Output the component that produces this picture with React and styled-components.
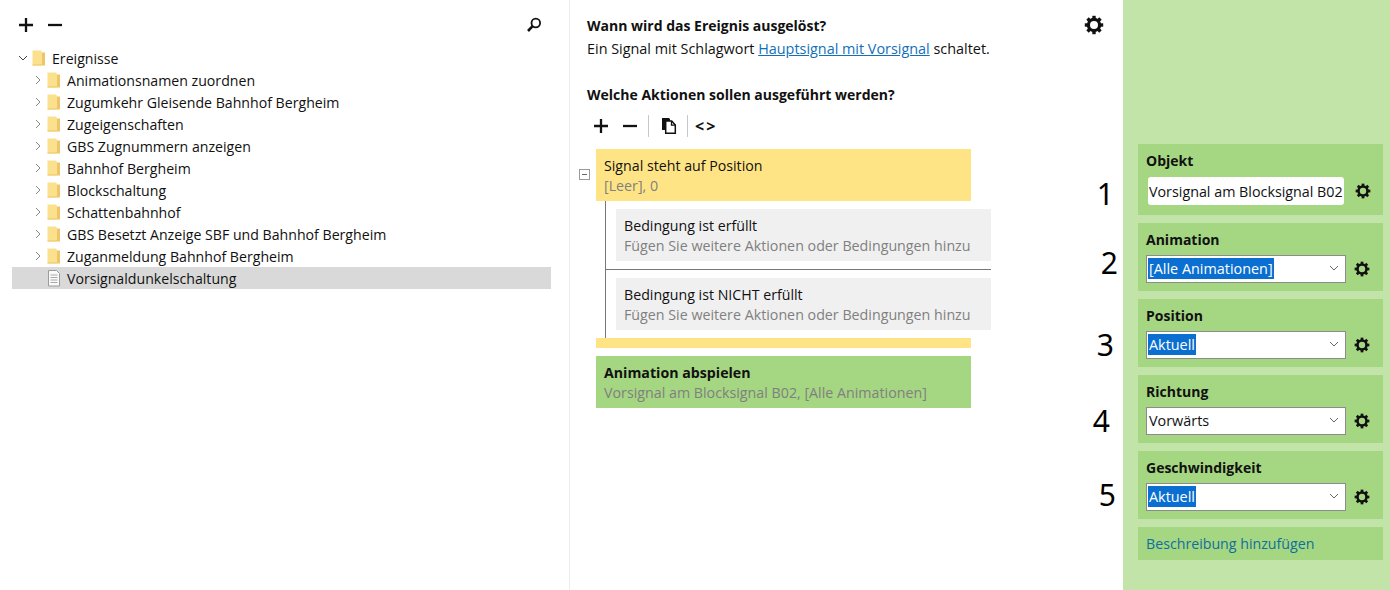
import styled, { createGlobalStyle } from "styled-components";

const Global = createGlobalStyle`
    html, body { margin: 0; padding: 0; background: #fff; }
    body { font-family: "Open Sans", "Noto Sans", sans-serif; font-size: 14.2px; color: #111; }
`;

const Page = styled.div`
    width: 1390px;
    height: 590px;
    display: grid;
    grid-template-columns: 570px 553px 267px;
    overflow: hidden;
`;

const Left = styled.div`
    border-right: 1px solid #ededed;
    padding: 12px 18px 0 12px;
`;

const TreeBar = styled.div`
    height: 25px;
    padding: 0 9px 0 6px;
    display: flex;
    align-items: center;
    gap: 13px;
    margin-bottom: 10px;
`;

const Spacer = styled.div`
    flex: 1;
`;

const Row = styled.div`
    height: 22px;
    display: flex;
    align-items: center;
    padding-left: ${props => props.$indent}px;
    background: ${props => props.$selected ? "#d9d9d9" : "transparent"};
    font-size: 14.15px;
    white-space: nowrap;
`;

const Arrow = styled.div`
    width: 14px;
    height: 22px;
    margin-right: 2px;
    display: flex;
    align-items: center;
    justify-content: center;
`;

const RowIcon = styled.svg`
    width: 15px;
    height: 18px;
    margin-right: 5px;
    flex: none;
`;

const Middle = styled.div`
    padding: 16px 0 0 17px;
    position: relative;
`;

const Heading = styled.div`
    font-weight: 700;
    line-height: 20px;
    font-size: 14px;
    margin-bottom: ${props => props.$gap || 0}px;
`;

const Sentence = styled.div`
    line-height: 22px;
    font-size: 14.4px;
    margin-bottom: 25px;
    & a { color: #1170b8; text-decoration: underline; }
`;

const TopGear = styled.svg`
    position: absolute;
    top: 15px;
    left: 514px;
    width: 20px;
    height: 20px;
`;

const ActionBar = styled.div`
    height: 24px;
    margin: 9px 0 11px 6px;
    display: flex;
    align-items: center;
    gap: 13px;
`;

const Divider = styled.div`
    width: 1px;
    height: 22px;
    background: #c8c8c8;
    margin: 0 -1px 0 -3px;
`;

const Code = styled.div`
    font-weight: 700;
    font-size: 16px;
    letter-spacing: 2px;
    margin-left: -5px;
`;

const Flow = styled.div`
    margin-left: 9px;
    width: 395px;
`;

const Block = styled.div`
    width: 375px;
    height: ${props => props.$height || 52}px;
    background: ${props => props.$color};
    padding: 7px 8px 0;
    box-sizing: border-box;
    margin-bottom: 8px;
    position: relative;
    white-space: nowrap;
`;

const Title = styled.div`
    line-height: 20px;
    font-weight: ${props => props.$bold ? 700 : 400};
`;

const Sub = styled.div`
    line-height: 20px;
    color: #808080;
    font-size: 14.25px;
`;

const Collapse = styled.div`
    position: absolute;
    left: -17px;
    top: 20px;
    width: 11px;
    height: 11px;
    border: 1px solid #9a9a9a;
    box-sizing: border-box;
    background: #fff;
    &::after {
        content: "";
        position: absolute;
        left: 2px;
        right: 2px;
        top: 4px;
        height: 1px;
        background: #666;
    }
`;

const Branches = styled.div`
    margin-left: 9px;
    border-left: 1px solid #777;
    margin-top: -8px;
    padding-top: 8px;
    height: 129px;
`;

const Branch = styled.div`
    margin-left: 10px;
    width: 375px;
    height: 52px;
    background: #f0f0f0;
    padding: 7px 8px 0;
    box-sizing: border-box;
    white-space: nowrap;
`;

const BranchLine = styled.div`
    height: 1px;
    background: #777;
    margin: 8px 0;
`;

const Sidebar = styled.div`
    background: #c3e4a9;
    padding: 144px 7px 0 15px;
    display: flex;
    flex-direction: column;
    gap: 8px;
`;

const Card = styled.div`
    background: #a5d682;
    height: ${props => props.$height || 68}px;
    box-sizing: border-box;
    padding: 7px 8px 0;
    position: relative;
`;

const Label = styled.div`
    font-weight: 700;
    line-height: 19px;
    font-size: 14px;
    margin-bottom: ${props => props.$gap || 6}px;
`;

const Field = styled.div`
    display: flex;
    align-items: center;
    gap: 8px;
`;

const TextBox = styled.div`
    width: 196px;
    height: 28px;
    margin: 0 3px 0 2px;
    background: #fff;
    border-radius: 3px;
    display: flex;
    align-items: center;
    padding-left: 1px;
    box-sizing: border-box;
    font-size: 14.3px;
    white-space: nowrap;
    overflow: hidden;
`;

const SelectBox = styled.div`
    width: 200px;
    height: 28px;
    background: #fff;
    border: 1px solid #8c8c8c;
    box-sizing: border-box;
    display: flex;
    align-items: center;
    justify-content: space-between;
    padding: 0 6px 2px 1px;
    font-size: 14.4px;
`;

const Picked = styled.span`
    background: ${props => props.$active ? "#0a6fd0" : "transparent"};
    color: ${props => props.$active ? "#fff" : "#111"};
    line-height: 21px;
    padding: 0 1px;
`;

const Marker = styled.div`
    position: absolute;
    right: calc(100% + ${props => props.$right}px);
    top: ${props => props.$top}px;
    font-size: 30px;
    line-height: 40px;
    color: #000;
    font-family: "Noto Sans", sans-serif;
`;

const AddLink = styled.div`
    background: #a5d682;
    height: 33px;
    display: flex;
    align-items: center;
    padding-left: 8px;
    color: #0f6f9c;
`;

const Plus = () => (
    <svg width="16" height="16" viewBox="0 0 16 16"><path d="M8 1v14M1 8h14" stroke="#111" strokeWidth="2.300" /></svg>
);

const Minus = () => (
    <svg width="16" height="16" viewBox="0 0 16 16"><path d="M1 8h14" stroke="#111" strokeWidth="2.300" /></svg>
);

const Search = () => (
    <svg width="16" height="16" viewBox="0 0 16 16" fill="none">
        <circle cx="9.800" cy="6" r="4.300" stroke="#111" strokeWidth="1.800" />
        <path d="M6.600 9.200 2 14" stroke="#111" strokeWidth="2.600" />
    </svg>
);

const Copy = () => (
    <svg width="16" height="18" viewBox="0 0 16 18" fill="none">
        <path d="M1 1h7l1 1v11H1z" fill="#111" />
        <path d="M4.700 4h6l3.600 4v8.300H4.700z" fill="#fff" stroke="#111" strokeWidth="1.500" />
        <path d="M10.500 4v4.200h3.800" stroke="#111" strokeWidth="1.300" />
    </svg>
);

const ChevronRight = () => (
    <svg width="8" height="10" viewBox="0 0 8 10" fill="none"><path d="M2 1l4 4-4 4" stroke="#888" strokeWidth="1" /></svg>
);

const ChevronDown = ({ color = "#444" }) => (
    <svg width="10" height="8" viewBox="0 0 10 8" fill="none"><path d="M1 2l4 4 4-4" stroke={color} strokeWidth="1" /></svg>
);

const Folder = () => (
    <RowIcon viewBox="0 0 15 18">
        <path d="M0.500 1.500h8.500l1 1.200v13.800H0.500z" fill="#fbe08d" />
        <path d="M10 3.500h3v13H0.500v-1H10z" fill="#efc667" />
    </RowIcon>
);

const Doc = () => (
    <RowIcon viewBox="0 0 15 18" fill="none">
        <path d="M1.500 1.500h8l3 3v12.500h-11z" fill="#fafafa" stroke="#9b9b9b" />
        <path d="M3.500 6h7M3.500 8.500h7M3.500 11h7M3.500 13.500h7" stroke="#a8a8a8" />
    </RowIcon>
);

const teeth = [0, 45, 90, 135, 180, 225, 270, 315];

// ring with eight square teeth, drawn on a 20 unit grid
const GearShape = () => (
    <>
        <circle cx="10" cy="10" r="5.600" fill="none" stroke="#111" strokeWidth="3.200" />
        {teeth.map(angle => (
            <rect key={angle} x="8.300" y="0.800" width="3.400" height="4" fill="#111" transform={`rotate(${angle} 10 10)`} />
        ))}
    </>
);

const GearIcon = styled.svg`
    width: 16px;
    height: 16px;
    flex: none;
`;

const Gear = () => (
    <GearIcon viewBox="0 0 20 20"><GearShape /></GearIcon>
);

const folders = [
    "Animationsnamen zuordnen",
    "Zugumkehr Gleisende Bahnhof Bergheim",
    "Zugeigenschaften",
    "GBS Zugnummern anzeigen",
    "Bahnhof Bergheim",
    "Blockschaltung",
    "Schattenbahnhof",
    "GBS Besetzt Anzeige SBF und Bahnhof Bergheim",
    "Zuganmeldung Bahnhof Bergheim",
];

const selects = [
    { label: "Animation", value: "[Alle Animationen]", active: true, marker: "2", right: 20, top: 20 },
    { label: "Position", value: "Aktuell", active: true, marker: "3", right: 24, top: 26 },
    { label: "Richtung", value: "Vorwärts", active: false, marker: "4", right: 28, top: 26 },
    { label: "Geschwindigkeit", value: "Aktuell", active: true, marker: "5", right: 22, top: 24 },
];

export default function App() {
    return (
        <Page>
            <Global />
            <Left>
                <TreeBar>
                    <Plus />
                    <Minus />
                    <Spacer />
                    <Search />
                </TreeBar>
                <Row $indent={4}>
                    <Arrow><ChevronDown /></Arrow>
                    <Folder />
                    Ereignisse
                </Row>
                {folders.map(name => (
                    <Row key={name} $indent={19}>
                        <Arrow><ChevronRight /></Arrow>
                        <Folder />
                        {name}
                    </Row>
                ))}
                <Row $indent={35} $selected>
                    <Doc />
                    Vorsignaldunkelschaltung
                </Row>
            </Left>
            <Middle>
                <TopGear viewBox="0 0 20 20"><GearShape /></TopGear>
                <Heading $gap={2}>Wann wird das Ereignis ausgelöst?</Heading>
                <Sentence>
                    Ein Signal mit Schlagwort <a href="#signal">Hauptsignal mit Vorsignal</a> schaltet.
                </Sentence>
                <Heading>Welche Aktionen sollen ausgeführt werden?</Heading>
                <ActionBar>
                    <Plus />
                    <Minus />
                    <Divider />
                    <Copy />
                    <Divider />
                    <Code>&lt;&gt;</Code>
                </ActionBar>
                <Flow>
                    <Block $color="#ffe485">
                        <Collapse />
                        <Title>Signal steht auf Position</Title>
                        <Sub>[Leer], 0</Sub>
                    </Block>
                    <Branches>
                        <Branch>
                            <Title>Bedingung ist erfüllt</Title>
                            <Sub>Fügen Sie weitere Aktionen oder Bedingungen hinzu</Sub>
                        </Branch>
                        <BranchLine />
                        <Branch>
                            <Title>Bedingung ist NICHT erfüllt</Title>
                            <Sub>Fügen Sie weitere Aktionen oder Bedingungen hinzu</Sub>
                        </Branch>
                    </Branches>
                    <Block $color="#ffe485" $height={10} />
                    <Block $color="#a5d682">
                        <Title $bold>Animation abspielen</Title>
                        <Sub>Vorsignal am Blocksignal B02, [Alle Animationen]</Sub>
                    </Block>
                </Flow>
            </Middle>
            <Sidebar>
                <Card $height={71}>
                    <Marker $right={24} $top={30}>1</Marker>
                    <Label $gap={7}>Objekt</Label>
                    <Field>
                        <TextBox>Vorsignal am Blocksignal B02</TextBox>
                        <Gear />
                    </Field>
                </Card>
                {selects.map(item => (
                    <Card key={item.label}>
                        <Marker $right={item.right} $top={item.top}>{item.marker}</Marker>
                        <Label>{item.label}</Label>
                        <Field>
                            <SelectBox>
                                <Picked $active={item.active}>{item.value}</Picked>
                                <ChevronDown color="#666" />
                            </SelectBox>
                            <Gear />
                        </Field>
                    </Card>
                ))}
                <AddLink>Beschreibung hinzufügen</AddLink>
            </Sidebar>
        </Page>
    );
}
